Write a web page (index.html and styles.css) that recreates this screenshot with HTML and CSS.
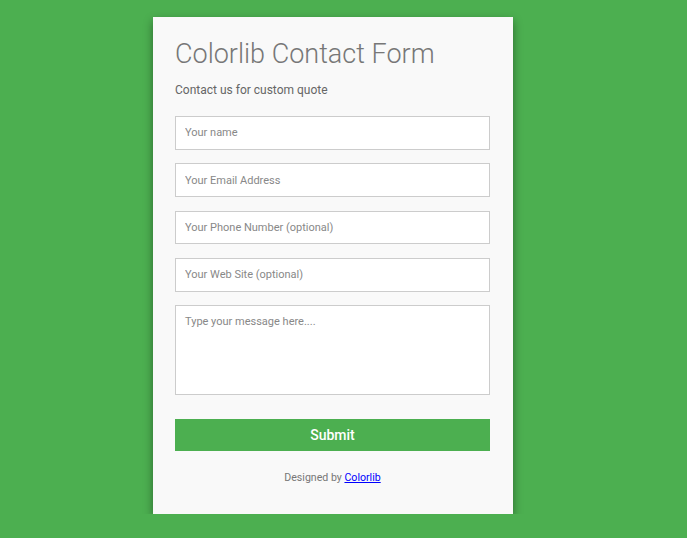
FILE: index.html
```html
<!DOCTYPE html>
<html>
<head>
<meta charset="utf-8">
<link rel="stylesheet" href="styles.css">
</head>
<body>
<div class="page">
  <div class="card">
    <h1 class="title">Colorlib Contact Form</h1>
    <p class="subtitle">Contact us for custom quote</p>
    <form class="form">
      <input class="field" type="text" placeholder="Your name">
      <input class="field" type="text" placeholder="Your Email Address">
      <input class="field" type="text" placeholder="Your Phone Number (optional)">
      <input class="field" type="text" placeholder="Your Web Site (optional)">
      <textarea class="field message" placeholder="Type your message here...."></textarea>
      <button class="submit" type="button">Submit</button>
    </form>
    <p class="credit">Designed by <a href="#" class="credit-link">Colorlib</a></p>
  </div>
</div>
</body>
</html>
```

FILE: styles.css
```css
html, body {
  margin: 0;
  padding: 0;
  background: #4caf50;
  font-family: Roboto, "Liberation Sans", sans-serif;
}
.page {
  display: flex;
  justify-content: center;
  padding: 17px 21px 0 0;
}
.card {
  width: 360px;
  box-sizing: border-box;
  height: 497px;
  background: #f9f9f9;
  padding: 20px 23px 0 22px;
  box-shadow: 0 4px 9px rgba(0, 0, 0, 0.4);
}
.title {
  margin: 0;
  font-size: 27px;
  font-weight: 300;
  color: #777;
  line-height: 34px;
}
.subtitle {
  margin: 11px 0 0;
  font-size: 12px;
  color: #666;
  line-height: 16px;
}
.form {
  display: flex;
  flex-direction: column;
  margin-top: 18px;
}
.field {
  box-sizing: border-box;
  width: 315px;
  height: 33.7px;
  margin: 0 0 13.6px;
  border: 1px solid #ccc;
  background: #fff;
  padding: 0 9px;
  font-family: Roboto, "Liberation Sans", sans-serif;
  font-size: 11px;
  color: #555;
  outline: none;
}
.field::placeholder {
  color: #888;
}
.message {
  height: 90px;
  padding: 9px 9px;
  resize: none;
  margin-bottom: 23.5px;
}
.submit {
  width: 315px;
  height: 32px;
  border: none;
  background: #4caf50;
  color: #fff;
  font-family: Roboto, "Liberation Sans", sans-serif;
  font-size: 14px;
  font-weight: 500;
  padding: 0;
}
.credit {
  margin: 20px 0 0;
  text-align: center;
  font-size: 10.6px;
  color: #777;
  line-height: 14px;
}
.credit-link {
  color: #00f;
}
```
